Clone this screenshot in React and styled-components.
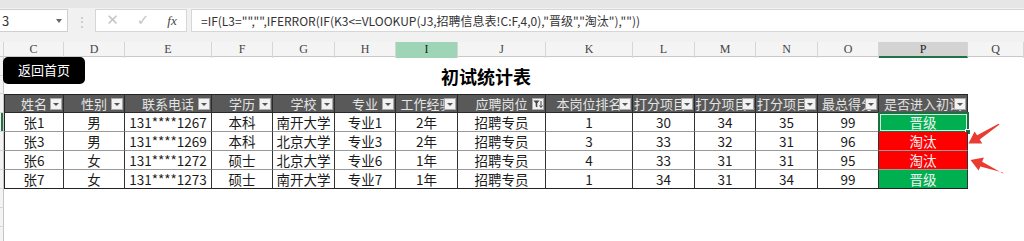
import React from 'react';
import styled, { createGlobalStyle, css } from 'styled-components';

const COLS = '4px 60px 61px 87px 61px 62px 61px 62px 88px 87px 62px 61px 62px 61px 89px 1fr';

const Global = createGlobalStyle`
  html, body { margin: 0; padding: 0; }
  body {
    width: 1024px; height: 241px; overflow: hidden; background: #fff;
    font-family: "Noto Sans CJK SC", "Noto Sans", sans-serif;
  }
  * { box-sizing: border-box; }
`;

const Page = styled.div`
  position: relative;
  width: 1024px;
  height: 241px;
  overflow: hidden;
  background: #fff;
`;

const TopBand = styled.div`
  height: 8px;
  background: #e6e6e6;
`;

const FormulaBar = styled.div`
  height: 34px;
  background: #f1f1f1;
  display: flex;
  align-items: flex-start;
  padding-top: 1px;
`;

const NameBox = styled.div`
  width: 69px;
  height: 23px;
  margin-left: -1px;
  background: #fff;
  border: 1px solid #cfcfcf;
  display: flex;
  align-items: center;
  justify-content: space-between;
  padding: 0 5px 0 2px;
  font-size: 13px;
  color: #333;
  overflow: hidden;
`;

const Caret = styled.span`
  width: 0; height: 0;
  border-left: 3px solid transparent;
  border-right: 3px solid transparent;
  border-top: 4px solid #666;
`;

const Dots = styled.div`
  width: 27px;
  height: 23px;
  display: flex;
  align-items: center;
  justify-content: center;
  color: #bdbdbd;
  font-size: 12px;
`;

const FxGroup = styled.div`
  width: 92px;
  height: 23px;
  background: #fff;
  border: 1px solid #d6d6d6;
  display: grid;
  grid-template-columns: 31px 30px 1fr;
  align-items: center;
  justify-items: center;
  padding-left: 1px;
`;

const FxIcon = styled.span`
  font-size: ${p => p.$size || 14}px;
  color: ${p => p.$dark ? '#444' : '#c4c4c4'};
  font-family: ${p => p.$serif ? '"Liberation Serif", "DejaVu Serif", serif' : '"DejaVu Sans", sans-serif'};
  font-style: ${p => p.$serif ? 'italic' : 'normal'};
  line-height: 1;
`;

const FormulaInput = styled.div`
  flex: 1;
  height: 23px;
  margin-left: 4px;
  margin-right: -1px;
  background: #fff;
  border: 1px solid #d6d6d6;
  padding-left: 9px;
  font-size: 12px;
  line-height: 21px;
  color: #333;
  white-space: nowrap;
  overflow: hidden;
`;

const ColHeaderRow = styled.div`
  display: grid;
  grid-template-columns: ${COLS};
  height: 15px;
  background: #f4f4f4;
  border-bottom: 1px solid #c8c8c8;
`;

const ColHead = styled.div`
  border-right: 1px solid #d6d6d6;
  font-family: "Liberation Serif", "DejaVu Serif", serif;
  font-size: 12px;
  line-height: 14px;
  text-align: center;
  color: #444;
  ${p => p.$sel === 'col' && css`background: #9fd5b7; color: #222;`}
  ${p => p.$sel === 'cell' && css`background: #d3d3d3; border-bottom: 2px solid #217346; color: #222;`}
`;

const SheetRow = styled.div`
  display: grid;
  grid-template-columns: ${COLS};
  height: ${p => p.$h}px;
`;

const StripStack = styled.div`
  display: flex;
  flex-direction: column;
`;

const Strip = styled.div`
  flex: 1;
  background: #f3f3f3;
  border-right: 1px solid #c6c6c6;
  border-bottom: 1px solid #d6d6d6;
  ${p => p.$active && css`box-shadow: inset -2px 0 0 #217346;`}
`;

const Banner = styled.div`
  grid-column: 2 / 16;
  display: grid;
  grid-template-columns: 1fr auto 1fr;
`;

const HomeButton = styled.button`
  justify-self: start;
  align-self: start;
  margin-left: -1px;
  width: 82px;
  height: 27px;
  border: none;
  border-radius: 5px;
  background: #000;
  color: #fff;
  font-family: "Noto Sans CJK SC", sans-serif;
  font-size: 13px;
  text-align: left;
  padding: 0 0 2px 15px;
  cursor: pointer;
`;

const Title = styled.h1`
  margin: 0;
  align-self: center;
  font-size: 18px;
  font-weight: 700;
  color: #000;
  line-height: 1;
`;

const HeadCell = styled.div`
  position: relative;
  background: #595959;
  color: #e4e4e4;
  font-size: 13px;
  line-height: 17px;
  text-align: center;
  white-space: nowrap;
  overflow: hidden;
  border-top: 1px solid #222;
  border-bottom: 1px solid #2a2a2a;
  border-right: 1px solid #2a2a2a;
  ${p => p.$first && css`border-left: 1px solid #222;`}
`;

const DropButton = styled.span`
  position: absolute;
  right: 1px;
  top: 3px;
  width: 12px;
  height: 12px;
  background: #f2f2f2;
  border: 1px solid #a9a9a9;
  display: flex;
  align-items: center;
  justify-content: center;
  &::after {
    content: '';
    ${p => !p.$filter && css`
      width: 0; height: 0;
      border-left: 3px solid transparent;
      border-right: 3px solid transparent;
      border-top: 3px solid #555;
    `}
  }
`;

const DataCell = styled.div`
  position: relative;
  background: ${p => p.$tone === 'pass' ? '#00b050' : p.$tone === 'fail' ? '#ff0000' : '#fff'};
  color: ${p => p.$tone ? '#f4f4f4' : '#1b1b1b'};
  font-size: 13.5px;
  line-height: 18px;
  text-align: center;
  white-space: nowrap;
  border-right: 1px solid #333;
  border-bottom: 1px solid ${p => p.$last ? '#222' : '#9a9a9a'};
  ${p => p.$first && css`border-left: 1px solid #222;`}
`;

const Selection = styled.span`
  position: absolute;
  inset: -1px -2px -2px -1px;
  border: 2px solid #1d6f42;
  box-shadow: inset 0 0 0 1px #d8f0df;
  pointer-events: none;
`;

const FillHandle = styled.span`
  position: absolute;
  right: -4px;
  bottom: -4px;
  width: 6px;
  height: 6px;
  background: #1d6f42;
  border: 1px solid #fff;
`;

const Blank = styled.div``;

const ArrowLayer = styled.svg`
  position: absolute;
  left: 0;
  top: 0;
  pointer-events: none;
`;

const headers = ['姓名', '性别', '联系电话', '学历', '学校', '专业', '工作经验', '应聘岗位', '本岗位排名', '打分项目1', '打分项目2', '打分项目3', '最总得分', '是否进入初试'];
const letters = ['C', 'D', 'E', 'F', 'G', 'H', 'I', 'J', 'K', 'L', 'M', 'N', 'O', 'P', 'Q'];

const rows = [
  ['张1', '男', '131****1267', '本科', '南开大学', '专业1', '2年', '招聘专员', '1', '30', '34', '35', '99', '晋级'],
  ['张3', '男', '131****1269', '本科', '北京大学', '专业3', '2年', '招聘专员', '3', '33', '32', '31', '96', '淘汰'],
  ['张6', '女', '131****1272', '硕士', '北京大学', '专业6', '1年', '招聘专员', '4', '33', '31', '31', '95', '淘汰'],
  ['张7', '女', '131****1273', '硕士', '南开大学', '专业7', '1年', '招聘专员', '1', '34', '31', '34', '99', '晋级'],
];

const FilterIcon = () => (
  <svg width="10" height="10" viewBox="0 0 10 10">
    <path d="M0.5 1.5 H6.5 L4.3 4.3 V8.5 L2.7 7.5 V4.3 Z" fill="#444" />
    <path d="M8 2 V8 M6.5 6.5 L8 8.5 L9.5 6.5" stroke="#444" strokeWidth="1" fill="none" />
  </svg>
);

export default function App() {
  return (
    <Page>
      <Global />
      <TopBand />
      <FormulaBar>
        <NameBox>
          <span>3</span>
          <Caret />
        </NameBox>
        <Dots>⋮</Dots>
        <FxGroup>
          <FxIcon $size={15}>✕</FxIcon>
          <FxIcon $size={15}>✓</FxIcon>
          <FxIcon $dark $serif $size={13}>fx</FxIcon>
        </FxGroup>
        <FormulaInput>=IF(L3="","",IFERROR(IF(K3&lt;=VLOOKUP(J3,招聘信息表!C:F,4,0),"晋级","淘汰"),""))</FormulaInput>
      </FormulaBar>

      <ColHeaderRow>
        <ColHead />
        {letters.map(l => (
          <ColHead key={l} $sel={l === 'I' ? 'col' : l === 'P' ? 'cell' : undefined}>{l}</ColHead>
        ))}
      </ColHeaderRow>

      <SheetRow $h={37}>
        <StripStack>
          <Strip />
          <Strip />
        </StripStack>
        <Banner>
          <HomeButton>返回首页</HomeButton>
          <Title>初试统计表</Title>
          <span />
        </Banner>
        <Blank />
      </SheetRow>

      <SheetRow $h={19}>
        <Strip />
        {headers.map((h, i) => (
          <HeadCell key={h} $first={i === 0}>
            {h}
            <DropButton $filter={h === '应聘岗位'}>{h === '应聘岗位' && <FilterIcon />}</DropButton>
          </HeadCell>
        ))}
        <Blank />
      </SheetRow>

      {rows.map((r, ri) => (
        <SheetRow key={ri} $h={19}>
          <Strip $active={ri === 0} />
          {r.map((v, ci) => {
            const isResult = ci === r.length - 1;
            return (
              <DataCell
                key={ci}
                $first={ci === 0}
                $last={ri === rows.length - 1}
                $tone={isResult ? (v === '晋级' ? 'pass' : 'fail') : undefined}
              >
                {v}
                {isResult && ri === 0 && (
                  <Selection>
                    <FillHandle />
                  </Selection>
                )}
              </DataCell>
            );
          })}
          <Blank />
        </SheetRow>
      ))}

      {[0, 1, 2].map(i => (
        <SheetRow key={'e' + i} $h={19}>
          <Strip />
        </SheetRow>
      ))}

      <ArrowLayer width="1024" height="241" viewBox="0 0 1024 241">
        <polygon
          points="999.5,124.5 979.7,139.6 982.3,143.6 968.5,143.5 974.6,131.4 977.1,135.2 998.5,123.8"
          fill="#ea3b32"
        />
        <polygon
          points="1003.5,173.8 982.1,161.8 983.9,157.6 970.5,160 978.6,170.6 980.3,166.5 1002.8,172.6"
          fill="#ea3b32"
        />
      </ArrowLayer>
    </Page>
  );
}
